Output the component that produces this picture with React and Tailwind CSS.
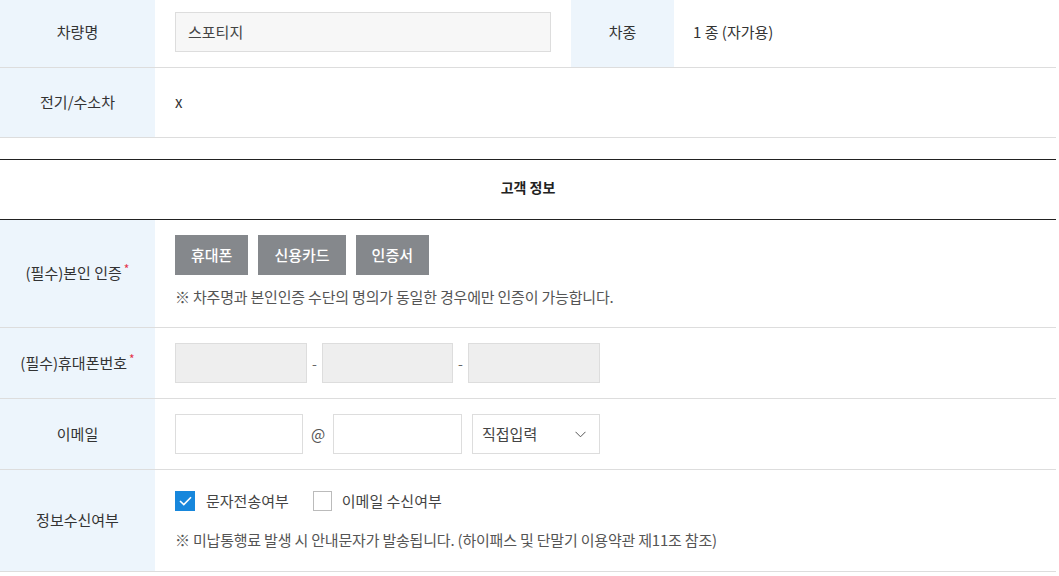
import React from 'react';

const font = { fontFamily: '"Noto Sans CJK KR", "Noto Sans", sans-serif' };

const Label = ({ children, req, className = '' }) => (
    <div className={`w-[155px] shrink-0 bg-[#edf5fc] flex items-center justify-center text-[15px] text-[#333] ${className}`}>
        <span>
            {children}
            {req && <sup className="text-[#e4344a] text-[12px] ml-[2px] top-[-5px]">*</sup>}
        </span>
    </div>
);

const Row = ({ children, className = '' }) => (
    <div className={`flex border-b border-[#dddddd] ${className}`}>{children}</div>
);

const App = () => {
    return (
        <div className="w-[1056px] bg-white text-[#333]" style={font}>
            {/* 차량 정보 */}
            <Row className="h-[68px]">
                <Label className="pb-[3px]">차량명</Label>
                <div className="w-[416px] pt-[12px] px-5">
                    <div className="w-full h-[40px] bg-[#f7f7f7] border border-[#dddddd] flex items-center px-3 text-[15px] text-[#444]">
                        스포티지
                    </div>
                </div>
                <div className="w-[103px] bg-[#edf5fc] flex items-center justify-center pb-[3px] text-[15px]">차종</div>
                <div className="flex-1 flex items-center pl-[19px] pb-[3px] text-[15px]">1 종 (자가용)</div>
            </Row>
            <Row className="h-[70px]">
                <Label>전기/수소차</Label>
                <div className="flex-1 flex items-center pl-5 text-[15px]">x</div>
            </Row>

            {/* 고객 정보 */}
            <div className="mt-[21px] h-[61px] border-y border-[#222] flex items-center justify-center pb-[4px] text-[14px] font-bold text-[#222]">
                고객 정보
            </div>

            <Row className="h-[108px]">
                <Label req>(필수)본인 인증</Label>
                <div className="flex-1 pl-5 pt-[15px]">
                    <div className="flex gap-[10px]">
                        {['휴대폰', '신용카드', '인증서'].map((t) => (
                            <button key={t} className="h-[40px] px-[16px] bg-[#85888c] text-white text-[15px] font-medium">
                                {t}
                            </button>
                        ))}
                    </div>
                    <p className="mt-[11px] text-[15px] tracking-[-0.2px] text-[#555]">※ 차주명과 본인인증 수단의 명의가 동일한 경우에만 인증이 가능합니다.</p>
                </div>
            </Row>

            <Row className="h-[71px]">
                <Label req>(필수)휴대폰번호</Label>
                <div className="flex-1 flex items-center pl-5 text-[14px] text-[#666]">
                    <div className="w-[132px] h-[40px] bg-[#eeeeee] border border-[#dddddd]" />
                    <span className="w-[15px] text-center">-</span>
                    <div className="w-[131px] h-[40px] bg-[#eeeeee] border border-[#dddddd]" />
                    <span className="w-[15px] text-center">-</span>
                    <div className="w-[132px] h-[40px] bg-[#eeeeee] border border-[#dddddd]" />
                </div>
            </Row>

            <Row className="h-[71px]">
                <Label>이메일</Label>
                <div className="flex-1 flex items-center pl-5 text-[15px] text-[#555]">
                    <div className="w-[128px] h-[40px] border border-[#dddddd]" />
                    <span className="w-[30px] text-center">@</span>
                    <div className="w-[129px] h-[40px] border border-[#dddddd]" />
                    <div className="ml-[10px] w-[128px] h-[40px] border border-[#dddddd] flex items-center justify-between pl-[9px] pr-[13px] text-[#444]">
                        직접입력
                        <svg width="11" height="7" viewBox="0 0 11 7" fill="none" stroke="#555" strokeWidth="1">
                            <path d="M0.5 0.8 L5.5 5.8 L10.5 0.8" />
                        </svg>
                    </div>
                </div>
            </Row>

            <Row className="h-[102px]">
                <Label>정보수신여부</Label>
                <div className="flex-1 pl-5 pt-[20px]">
                    <div className="flex items-center text-[15px] text-[#444]">
                        <span className="w-[20px] h-[20px] bg-[#1787dc] flex items-center justify-center">
                            <svg width="13" height="10" viewBox="0 0 13 10" fill="none" stroke="white" strokeWidth="1.6">
                                <path d="M1 5 L4.8 8.6 L12 1.2" />
                            </svg>
                        </span>
                        <span className="ml-[11px]">문자전송여부</span>
                        <span className="ml-[24px] w-[19px] h-[20px] border border-[#bbbbbb]" />
                        <span className="ml-[10px]">이메일 수신여부</span>
                    </div>
                    <p className="mt-[16px] text-[15px] tracking-[-0.2px] text-[#555]">※ 미납통행료 발생 시 안내문자가 발송됩니다. (하이패스 및 단말기 이용약관 제11조 참조)</p>
                </div>
            </Row>
        </div>
    );
};

export default App;
